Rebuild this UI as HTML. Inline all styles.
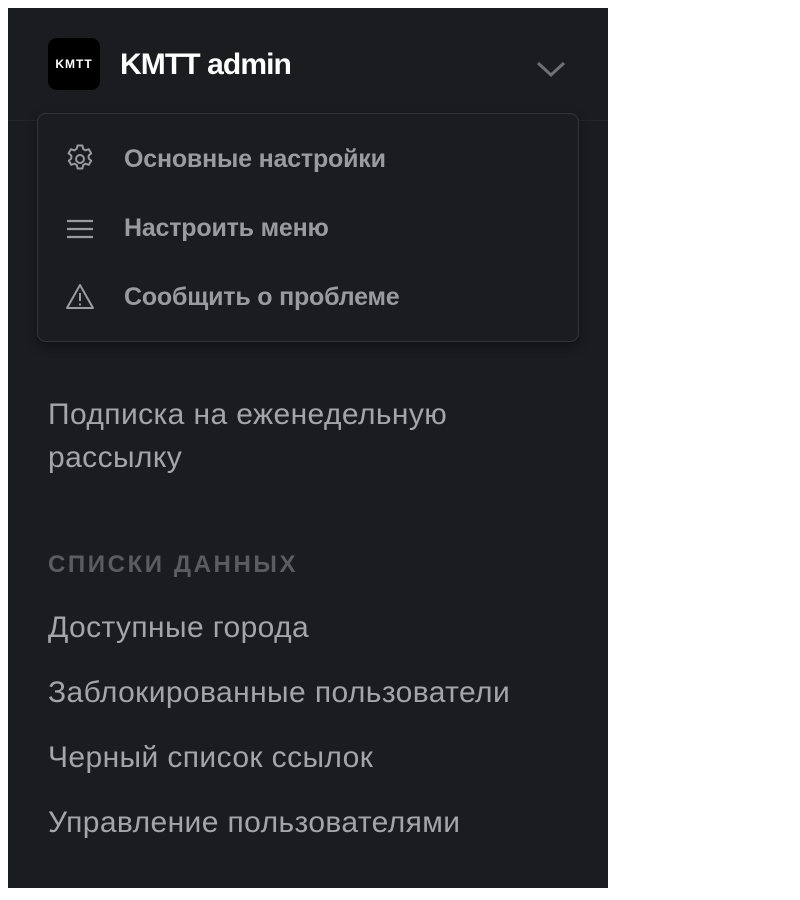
<!DOCTYPE html>
<html><head><meta charset="utf-8"><style>
*{margin:0;padding:0;box-sizing:border-box}
body{width:800px;height:900px;background:#fff;position:relative;font-family:"Liberation Sans",sans-serif;overflow:hidden}
.sb{position:absolute;left:8px;top:8px;width:600px;height:880px;background:#1b1c20}
.hd{position:absolute;left:0;top:0;width:600px;height:113px;border-bottom:1px solid #25262b}
.logo{position:absolute;left:40px;top:30px;width:52px;height:52px;background:#000;border-radius:9px;color:#fff;font-weight:bold;font-size:12px;letter-spacing:1px;text-align:center;line-height:52px}
.ttl{position:absolute;left:112px;top:40px;color:#fff;font-weight:bold;font-size:30px;letter-spacing:-0.9px}
.chev{position:absolute;left:528px;top:52px}
.dd{position:absolute;left:29px;top:105px;width:542px;height:229px;background:#1b1c20;border:1px solid #34353a;border-radius:9px;box-shadow:0 4px 12px rgba(0,0,0,.4)}
.it{position:absolute;left:86px;color:#9a9ba1;font-weight:bold;font-size:25px;letter-spacing:-0.2px}
.ic{position:absolute;left:26px}
.m{position:absolute;left:40px;color:#a4a5ab;font-size:30px;letter-spacing:0.4px;line-height:43px}
.sec{position:absolute;left:40px;top:543px;color:#5b5c62;font-weight:bold;font-size:24px;letter-spacing:2.6px}
</style></head><body>
<div class="sb">
<div class="hd"></div>
<div class="logo">KMTT</div>
<div class="ttl">KMTT admin</div>
<svg class="chev" width="30" height="18" viewBox="0 0 30 18"><path d="M2 3 L15 15 L28 3" fill="none" stroke="#6f7076" stroke-width="3"/></svg>
<div class="dd">
<svg class="ic" style="top:28px;left:25px" width="34" height="34" viewBox="0 0 24 24" fill="none" stroke="#9a9ba1" stroke-width="1.4"><path d="M10.3 2.5h3.4l.5 2.4 1.7 1 2.3-.8 1.7 2.9-1.8 1.6v2l1.8 1.6-1.7 2.9-2.3-.8-1.7 1-.5 2.4h-3.4l-.5-2.4-1.7-1-2.3.8-1.7-2.9 1.8-1.6v-2L3.9 8l1.7-2.9 2.3.8 1.7-1z" stroke-linejoin="round"/><circle cx="12" cy="12" r="2.8"/></svg>
<div class="it" style="top:31px">Основные настройки</div>
<svg class="ic" style="top:99px" width="32" height="32" viewBox="0 0 32 32" stroke="#9a9ba1" stroke-width="2.2"><path d="M3 8h26M3 16h26M3 24h26"/></svg>
<div class="it" style="top:100px">Настроить меню</div>
<svg class="ic" style="top:167px" width="32" height="32" viewBox="0 0 32 32" fill="none" stroke="#9a9ba1" stroke-width="2"><path d="M16 4 L29 27 H3 Z" stroke-linejoin="round"/><path d="M16 12v8M16 22.5v2"/></svg>
<div class="it" style="top:169px">Сообщить о проблеме</div>
</div>
<div class="m" style="top:385px">Подписка на еженедельную<br>рассылку</div>
<div class="sec">СПИСКИ ДАННЫХ</div>
<div class="m" style="top:598px">Доступные города</div>
<div class="m" style="top:663px">Заблокированные пользователи</div>
<div class="m" style="top:728px">Черный список ссылок</div>
<div class="m" style="top:793px">Управление пользователями</div>
</div>
</body></html>
